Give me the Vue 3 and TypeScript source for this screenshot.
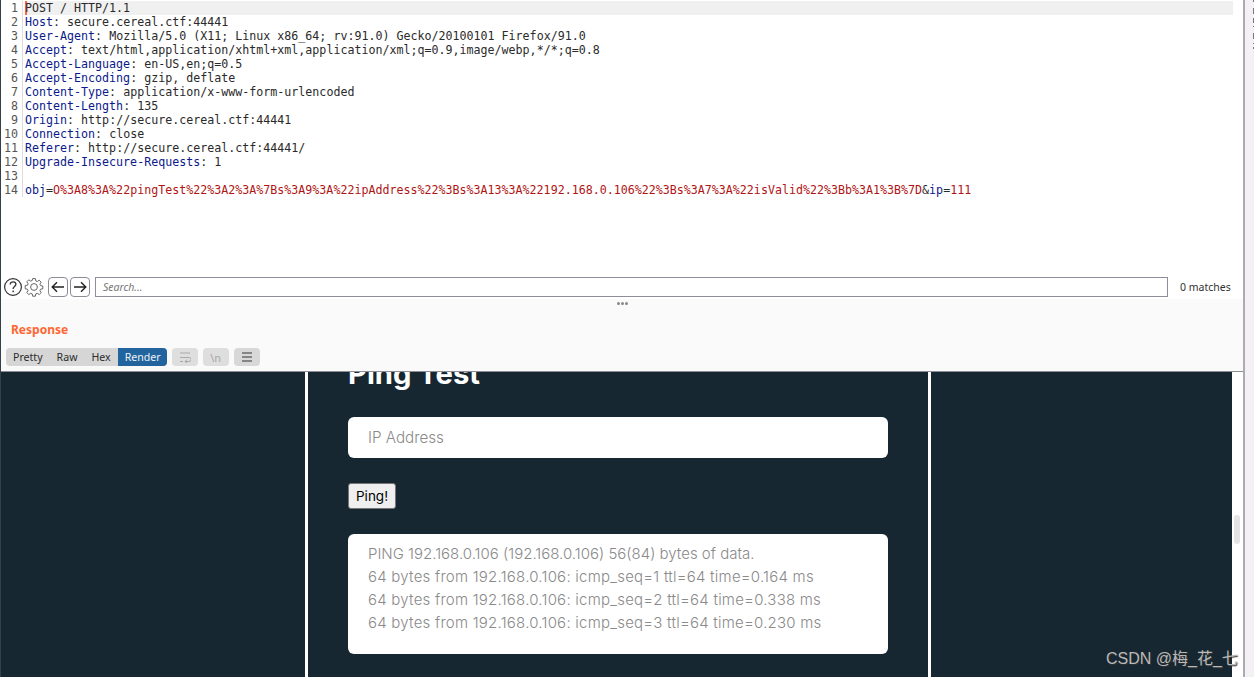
<script setup lang="ts">
interface Part { t: string; c: string }
interface Line { parts: Part[] }
const h = (k: string, v: string): Line => ({ parts: [{ t: k, c: 'key' }, { t: ': ', c: 'plain' }, { t: v, c: 'plain' }] })
const lines: Line[] = [
  { parts: [{ t: 'POST / HTTP/1.1', c: 'plain' }] },
  h('Host', 'secure.cereal.ctf:44441'),
  h('User-Agent', 'Mozilla/5.0 (X11; Linux x86_64; rv:91.0) Gecko/20100101 Firefox/91.0'),
  h('Accept', 'text/html,application/xhtml+xml,application/xml;q=0.9,image/webp,*/*;q=0.8'),
  h('Accept-Language', 'en-US,en;q=0.5'),
  h('Accept-Encoding', 'gzip, deflate'),
  h('Content-Type', 'application/x-www-form-urlencoded'),
  h('Content-Length', '135'),
  h('Origin', 'http://secure.cereal.ctf:44441'),
  h('Connection', 'close'),
  h('Referer', 'http://secure.cereal.ctf:44441/'),
  h('Upgrade-Insecure-Requests', '1'),
  { parts: [] },
  { parts: [
    { t: 'obj', c: 'key' }, { t: '=', c: 'plain' },
    { t: 'O%3A8%3A%22pingTest%22%3A2%3A%7Bs%3A9%3A%22ipAddress%22%3Bs%3A13%3A%22192.168.0.106%22%3Bs%3A7%3A%22isValid%22%3Bb%3A1%3B%7D', c: 'val' },
    { t: '&', c: 'plain' }, { t: 'ip', c: 'key' }, { t: '=', c: 'plain' }, { t: '111', c: 'val' }
  ] }
]
const pingHead = 'PING 192.168.0.106 (192.168.0.106) 56(84) bytes of data.'
const pingLines = [
  '64 bytes from 192.168.0.106: icmp_seq=1 ttl=64 time=0.164 ms',
  '64 bytes from 192.168.0.106: icmp_seq=2 ttl=64 time=0.338 ms',
  '64 bytes from 192.168.0.106: icmp_seq=3 ttl=64 time=0.230 ms'
]
const tabs = ['Pretty', 'Raw', 'Hex', 'Render']
const ticks = [[0, 2], [8, 6], [18, 5], [26, 1], [33, 6], [43, 1], [47, 2]]
</script>

<template>
  <div class="root">
    <div class="main">
      <section class="editor">
        <div v-for="(l, i) in lines" :key="i" class="line" :class="{ first: i === 0 }">
          <span class="num">{{ i + 1 }}</span>
          <span class="code"><span v-for="(p, j) in l.parts" :key="j" :class="p.c">{{ p.t }}</span></span>
        </div>
      </section>

      <div class="searchbar">
        <svg class="ic-help" width="20" height="20" viewBox="0 0 20 20">
          <circle cx="10" cy="10" r="8.4" fill="none" stroke="#333" stroke-width="1.2" />
          <path d="M7.2 7.6c0-1.700 1.300-2.800 2.900-2.800s2.800 1 2.800 2.500c0 2.300-2.800 2.300-2.800 4.700" fill="none" stroke="#333" stroke-width="1.3" />
          <rect x="9.4" y="13.6" width="1.500" height="1.600" fill="#333" />
        </svg>
        <svg class="ic-gear" width="20" height="20" viewBox="0 0 20 20">
          <path d="M8.6 1.6h2.800l.4 2.300 1.500.6 1.900-1.300 2 2-1.300 1.900.6 1.500 2.300.4v2.800l-2.300.4-.6 1.500 1.300 1.900-2 2-1.900-1.300-1.500.6-.4 2.300H8.600l-.4-2.300-1.500-.6-1.900 1.300-2-2 1.300-1.900-.6-1.500-2.300-.4V8.600l2.300-.4.6-1.500-1.300-1.900 2-2 1.900 1.300 1.500-.6z" fill="none" stroke="#666" stroke-width="1" />
          <circle cx="10" cy="10" r="3.4" fill="none" stroke="#666" stroke-width="1" />
        </svg>
        <button class="nav"><svg width="14" height="12" viewBox="0 0 14 12"><path d="M13 6H1.500M6 1.200 1.200 6 6 10.800" fill="none" stroke="#222" stroke-width="1.4" /></svg></button>
        <button class="nav"><svg width="14" height="12" viewBox="0 0 14 12"><path d="M1 6h11.500M8 1.200 12.800 6 8 10.800" fill="none" stroke="#222" stroke-width="1.4" /></svg></button>
        <div class="search">Search...</div>
        <div class="matches">0 matches</div>
      </div>

      <div class="divider"><i></i><i></i><i></i></div>

      <div class="resp-head">
        <div class="resp-title">Response</div>
        <div class="toolbar">
          <div class="tabs">
            <span v-for="t in tabs" :key="t" class="tab" :class="{ active: t === 'Render' }">{{ t }}</span>
          </div>
          <span class="tool off">
            <svg width="12" height="11" viewBox="0 0 12 11"><path d="M1 1h10M1 5.500h9a2 2 0 0 1 0 4H6M1 9.500h3M8 7.500l-2 2 2 1.500" fill="none" stroke="#a9a9a9" stroke-width="1" /></svg>
          </span>
          <span class="tool off text">\n</span>
          <span class="tool">
            <svg width="12" height="10" viewBox="0 0 12 10"><path d="M1 1h10M1 5h10M1 9h10" fill="none" stroke="#333" stroke-width="1.2" /></svg>
          </span>
        </div>
      </div>

      <section class="render">
        <div class="page">
          <div class="col">
            <h1 class="title">Ping Test</h1>
            <div class="input">IP Address</div>
            <button class="ping">Ping!</button>
            <div class="output">
              <div class="out-head">{{ pingHead }}</div>
              <div v-for="p in pingLines" :key="p">{{ p }}</div>
            </div>
          </div>
        </div>
        <div class="scroll"><div class="thumb"></div></div>
      </section>
    </div>
    <div class="side">
      <i v-for="t in ticks" :key="t[0]" class="tick" :style="{ top: t[0] + 'px', height: t[1] + 'px' }"></i>
    </div>
    <div class="mark">CSDN @梅_花_七</div>
  </div>
</template>

<style>
html, body { margin: 0; padding: 0; overflow: hidden; }
</style>

<style scoped>
.root { position: relative; display: flex; width: 1254px; height: 677px; overflow: hidden; background: #fff; font-family: "Noto Sans", sans-serif; }
.main { width: 1243px; display: flex; flex-direction: column; border-left: 1px solid #33414a; box-sizing: border-box; }
.side { position: relative; flex: 1; background: #f3f1f3; border-left: 2px solid #aeaab2; }
.tick { position: absolute; right: 0; width: 1px; background: #77757a; }

.editor { height: 274px; background: #fff; padding-top: 1px; font-family: "DejaVu Sans Mono", monospace; font-size: 11.65px; line-height: 14px; flex: none; }
.line { display: flex; height: 14px; white-space: pre; }
.line.first { margin-right: 10px; }
.line.first .code { background: #f0f0f0; box-shadow: inset 2px 0 0 #ff6633; }
.num { width: 22px; box-sizing: border-box; text-align: right; padding-right: 4px; color: #555; background: #fff; border-right: 1px solid #ddd; flex: none; }
.code { margin-left: 2px; flex: 1; }
.key { color: #0a1a8c; }
.plain { color: #2a2a2a; }
.val { color: #b01515; }

.searchbar { flex: none; height: 24px; display: flex; align-items: center; padding-left: 2px; background: #fff; }
.ic-gear { margin-left: 1px; }
.nav { width: 20px; height: 20px; margin-left: 2px; padding: 0; display: flex; align-items: center; justify-content: center; background: #fff; border: 1px solid #8b8b95; border-radius: 4px; }
.ic-gear + .nav { margin-left: 4px; }
.search { margin-left: 5px; width: 1073px; height: 20px; box-sizing: border-box; border: 1px solid #8d8d9b; padding-left: 7px; font-style: italic; font-size: 10.5px; line-height: 18px; color: #777; }
.matches { margin-left: 12px; font-size: 10.5px; color: #333; }

.divider { flex: none; height: 9px; background: #fafafa; display: flex; justify-content: center; align-items: center; gap: 1px; }
.divider i { width: 3px; height: 3px; border-radius: 50%; background: #888; }

.resp-head { flex: none; height: 64px; box-sizing: border-box; background: #fafafa; padding: 14px 0 0 5px; border-bottom: 1px solid #8d8d95; }
.resp-title { margin-left: 5px; font-size: 12px; line-height: 16px; font-weight: 700; color: #ff6633; }
.toolbar { display: flex; gap: 5px; margin-top: 10px; align-items: center; }
.tabs { display: flex; height: 18px; border-radius: 4px; overflow: hidden; background: #d6d6d6; }
.tab { padding: 0 7px; font-size: 10.6px; line-height: 18px; color: #2c2c2c; }
.tab.active { padding-right: 6px; background: #22649e; color: #eef2f7; }
.tool { width: 26px; height: 18px; display: flex; align-items: center; justify-content: center; border-radius: 4px; background: #d8d8d8; }
.tool.off { background: #dedede; }
.tool.text { font-size: 11px; color: #a9a9a9; }

.render { flex: 1; display: flex; min-height: 0; overflow: hidden; }
.page { flex: 1; background: #172732; display: flex; overflow: hidden; }
.col { width: 626px; flex: none; margin-left: 304px; box-sizing: border-box; border-left: 3px solid #fff; border-right: 3px solid #fff; padding: 0 40px; font-family: "Inter", sans-serif; font-weight: 300; }
.title { margin: -19px 0 0; font-size: 29.2px; line-height: 42px; font-weight: 700; color: #fff; }
.input { margin-top: 22px; height: 41px; box-sizing: border-box; padding-left: 20px; background: #fff; border-radius: 6px; font-size: 15.2px; line-height: 41px; color: #8a8a8a; }
.ping { display: block; margin-top: 25px; width: 48px; height: 26px; padding: 0; box-sizing: border-box; background: #efefef; border: 1px solid #767676; border-radius: 3px; font-family: "Inter", sans-serif; font-size: 13.5px; color: #000; }
.output { margin-top: 25px; height: 120px; box-sizing: border-box; padding: 8px 20px; background: #fff; border-radius: 6px; font-size: 15px; letter-spacing: 0.23px; line-height: 23px; color: #8a8a8a; white-space: nowrap; }
.out-head { letter-spacing: 0; }
.scroll { width: 11px; flex: none; background: #fff; position: relative; }
.thumb { position: absolute; left: 2px; top: 143px; width: 6px; height: 29px; border-radius: 3px; background: #e4e4e4; }

.mark { position: absolute; left: 1106px; top: 649px; font-family: "Liberation Sans", "Noto Sans CJK SC", sans-serif; font-size: 16px; line-height: 20px; color: #b9b9b9; text-shadow: 1px 1px 1px #333; white-space: nowrap; }
</style>
